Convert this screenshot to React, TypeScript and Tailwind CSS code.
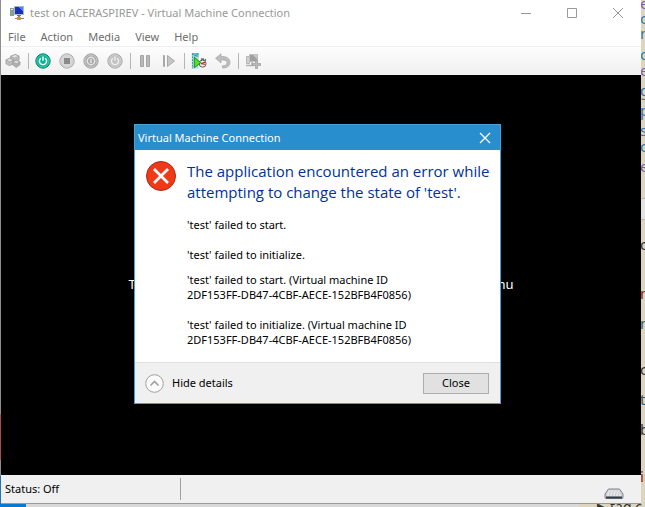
import React from "react";
import clsx from "clsx";

const menus = ["File", "Action", "Media", "View", "Help"];

const details = [
  { text: "'test' failed to start.", gap: "mt-0" },
  { text: "'test' failed to initialize.", gap: "mt-[15px]" },
  {
    text: "'test' failed to start. (Virtual machine ID 2DF153FF-DB47-4CBF-AECE-152BFB4F0856)",
    gap: "mt-[10px]",
  },
  {
    text: "'test' failed to initialize. (Virtual machine ID 2DF153FF-DB47-4CBF-AECE-152BFB4F0856)",
    gap: "mt-[15px]",
  },
];

// bits of the page that is open behind the window
const behind = [
  { char: "e", top: -6, color: "#7a5cc0" },
  { char: "c", top: 9, color: "#2878b8" },
  { char: "n", top: 24, color: "#2878b8" },
  { char: "c", top: 45, color: "#2878b8" },
  { char: "e", top: 61, color: "#7a5cc0" },
  { char: "g", top: 81, color: "#2878b8" },
  { char: "p", top: 101, color: "#2878b8" },
  { char: "s", top: 121, color: "#2878b8" },
  { char: "c", top: 137, color: "#2878b8" },
  { char: "e", top: 157, color: "#7a5cc0" },
  { char: "c", top: 235, color: "#333333" },
  { char: "n", top: 284, color: "#8b1a1a" },
  { char: "n", top: 314, color: "#27627f" },
  { char: "c", top: 360, color: "#333333" },
  { char: "t", top: 390, color: "#27627f" },
  { char: "b", top: 420, color: "#333333" },
  { char: "in", top: 467, color: "#8b1a1a" },
];

const VmIcon = () => (
  <svg width="16" height="16" viewBox="0 0 16 16" shapeRendering="crispEdges">
    <rect x="1" y="3" width="4" height="8" fill="#8f989c" />
    <rect x="2" y="4" width="2" height="1" fill="#e4e8ea" />
    <rect x="2" y="6" width="1" height="3" fill="#5fd14e" />
    <rect x="5" y="1" width="10" height="9" fill="#aeb8cc" />
    <rect x="6" y="2" width="8" height="7" fill="#1632b4" />
    <path d="M9 2h5v4z" fill="#4d80ec" />
    <rect x="8" y="10" width="4" height="1" fill="#6d747c" />
    <rect x="9" y="11" width="2" height="2" fill="#9a8a58" />
    <rect x="6" y="13" width="9" height="1" fill="#83888c" />
    <rect x="8" y="12" width="4" height="3" fill="#d9921b" />
  </svg>
);

const KeysIcon = () => (
  <svg width="17" height="16" viewBox="0 0 17 16" stroke="#999" strokeWidth=".7">
    <path d="M6 3l5-2 4 2v4l-5 2-4-2z" fill="#bdbdbd" />
    <path d="M6 3l5-2 4 2-5 2z" fill="#e2e2e2" />
    <path d="M1 7l4-2 4 2v4l-4 2-4-2z" fill="#bdbdbd" />
    <path d="M1 7l4-2 4 2-4 2z" fill="#e2e2e2" />
    <path d="M8 9l4-2 4 2v3l-4 3-4-3z" fill="#b0b0b0" />
    <path d="M8 9l4-2 4 2-4 2z" fill="#dcdcdc" />
  </svg>
);

const RoundIcon = ({ kind }: { kind: "start" | "off" | "shutdown" | "save" }) => {
  const on = kind === "start";
  const dark = kind === "shutdown";
  return (
    <svg width="16" height="16" viewBox="0 0 16 16" fill="none">
      <circle cx="8" cy="8" r="7.2" fill={on ? "#0bb595" : dark ? "#a9a9a9" : kind === "off" ? "#d6d6d6" : "#c2c2c2"} stroke={on ? "#16806e" : "#adadad"} />
      <circle cx="8" cy="8" r="6" stroke={on ? "#35ceb1" : "#cecece"} strokeWidth=".8" />
      {kind === "off" && <rect x="5" y="5" width="6" height="6" fill="#8a8a8a" />}
      {dark && (
        <>
          <circle cx="8" cy="8" r="3.7" stroke="#e6e6e6" strokeWidth="1.4" />
          <path d="M8 6v4" stroke="#e6e6e6" strokeWidth="1.5" />
        </>
      )}
      {(on || kind === "save") && (
        <path d="M5.8 5.2a3.6 3.6 0 1 0 4.4 0M8 3.5v4.2" stroke={on ? "#fff" : "#efefef"} strokeWidth="1.4" />
      )}
    </svg>
  );
};

const PauseIcon = () => (
  <svg width="16" height="16" viewBox="0 0 16 16" fill="#b8b8b8" stroke="#a6a6a6">
    <path d="M3.5 2.5h3v11h-3zM9.5 2.5h3v11h-3z" />
  </svg>
);

const ResumeIcon = () => (
  <svg width="16" height="16" viewBox="0 0 16 16" fill="#c6c6c6" stroke="#a8a8a8">
    <path d="M2.5 2.5h1v11h-1zM6.5 2.5v11l7-5.5z" />
  </svg>
);

const CheckpointIcon = () => (
  <svg width="17" height="16" viewBox="0 0 17 16">
    <path d="M1 0h7v16H1z" fill="#a9e0e8" />
    <path d="M1.5 0v16M7.5 0v4" stroke="#2496a6" strokeDasharray="2 1" />
    <path d="M3 2.5h4M1 .5h7" stroke="#158290" />
    <circle cx="12.3" cy="10.8" r="3.7" fill="#eee" stroke="#555" />
    <path d="M10.5 6H14M14.5 7.5l1.5-1" stroke="#444" strokeWidth="1.2" />
    <path d="M15 9.3l-4.5 1.5 4.5.7" stroke="#c41e28" strokeWidth="1.2" fill="none" />
    <path d="M3.5 4v11.3l6.8-5.6z" fill="#55dc27" stroke="#188a17" />
  </svg>
);

const RevertIcon = () => (
  <svg width="16" height="16" viewBox="0 0 16 16">
    <path d="M.5 5.3L6 .8v2.7c5-.3 9 1.5 9 6 0 3.5-3 5.5-7.5 5.5v-2.2c2.5 0 4.5-1 4.5-3 0-2.3-2.5-3-6-2.8v3z" fill="#bdbdbd" stroke="#a8a8a8" strokeWidth=".7" />
  </svg>
);

const EnhancedIcon = () => (
  <svg width="16" height="16" viewBox="0 0 16 16">
    <path d="M1.5 3.5h3v7h-3z" fill="#d0d0d0" stroke="#b5b5b5" />
    <path d="M4.5 1.5h8v7h-8z" fill="#a0a0a0" stroke="#c0c0c0" />
    <path d="M8 2h4v4z" fill="#c8c8c8" />
    <path d="M1 12.5h8M7 9v4" stroke="#b0b0b0" strokeWidth="1.5" />
    <path d="M10.5 7.5h2v3h3v2h-3v3h-2v-3h-3v-2h3z" fill="#b8b8b8" stroke="#a0a0a0" strokeWidth=".8" />
  </svg>
);

const Separator = ({ className }: { className?: string }) => (
  <span className={clsx("h-4 w-px bg-[#b5b5b5]", className)} />
);

const ToolButton = ({ label, className, children }: { label: string; className?: string; children: React.ReactNode }) => (
  <button aria-label={label} className={clsx("flex w-4 shrink-0 justify-center", className)}>
    {children}
  </button>
);

const Desktop = () => (
  <div className="absolute inset-0 overflow-hidden bg-[#ddd6bd]" aria-hidden="true">
    <div className="absolute inset-y-0 left-0 w-px bg-[#8e8e92]" />
    <div className="absolute left-0 top-[414px] h-[46px] w-px bg-[#a34e4a]" />
    <div className="absolute left-0 top-[476px] h-7 w-px bg-[#2674ae]" />
    <div className="absolute bottom-0 left-0 right-[66px] h-1 bg-[#d8d8d8]" />
    <div className="absolute bottom-0 left-0 h-1 w-[26px] bg-[#0779d0]" />
    <div className="absolute right-0 top-[198px] h-[22px] w-1 border-y border-[#bfb89f] bg-[#e4e2e0]" />
    {behind.map(({ char, top, color }) => (
      <span key={top} className="absolute left-[640px] text-[15px] leading-[18px]" style={{ top, color }}>
        {char}
      </span>
    ))}
    <span className="absolute left-[597px] top-[499px] flex items-center gap-1 whitespace-nowrap text-sm leading-[14px] text-[#333]">
      <span className="text-xs">▶</span>tag c
    </span>
  </div>
);

const ErrorDialog = () => (
  <section
    role="dialog"
    aria-labelledby="dialog-title"
    className="absolute left-[133px] top-[49px] flex w-[367px] flex-col border border-[#4a9fd4] bg-white text-black"
  >
    <header className="flex h-[25px] items-center justify-between bg-[#288ecd] pl-[3px] pr-[9px] text-white">
      <h2 id="dialog-title" className="text-[11px] leading-4">Virtual Machine Connection</h2>
      <button aria-label="Close dialog">
        <svg width="12" height="12" viewBox="0 0 12 12" stroke="#fff" strokeWidth="1.3">
          <path d="M1 1l10 10M11 1L1 11" />
        </svg>
      </button>
    </header>
    <div className="flex gap-[10px] pb-[15px] pl-[11px] pt-[11px]">
      <svg className="shrink-0" width="31" height="31" viewBox="0 0 31 31">
        <circle cx="15" cy="15" r="14.5" fill="#f03a17" stroke="#a32c18" />
        <path d="M8 8l14 14M22 8L8 22" stroke="#fff" strokeWidth="2.8" />
      </svg>
      <div>
        <h1 className="w-[308px] font-['Open_Sans',sans-serif] text-[15px] leading-[21px] text-[#003399]">
          The application encountered an error while attempting to change the state of 'test'.
        </h1>
        <div className="mt-[14px] w-[240px] text-[11px] leading-[15px]">
          {details.map(({ text, gap }) => (
            <p key={text} className={gap}>{text}</p>
          ))}
        </div>
      </div>
    </div>
    <footer className="flex h-[41px] items-center justify-between border-t border-[#dfdfdf] bg-[#f0f0f0] pl-[10px] pr-[11px] text-[11px]">
      <button className="flex items-center gap-2">
        <svg width="19" height="19" viewBox="0 0 19 19" fill="none" stroke="#a0a0a0">
          <circle cx="9.5" cy="9.5" r="8.8" fill="#fbfbfb" />
          <path d="M5.5 11.5l4-4 4 4" strokeWidth="1.6" />
        </svg>
        Hide details
      </button>
      <button className="h-[21px] w-[66px] border border-[#adadad] bg-[#e1e1e1]">Close</button>
    </footer>
  </section>
);

const App = () => {
  return (
    <div className="relative flex min-h-screen flex-col overflow-hidden font-['Noto_Sans','Open_Sans',sans-serif]">
      <Desktop />
      <main className="relative mb-[3px] ml-px mr-1 flex flex-1 flex-col border-b border-[#9a9a9a] bg-white">
        <header className="flex h-[25px] items-center pl-2 text-[#999]">
          <VmIcon />
          <h1 className="ml-[5px] flex-1 text-[11px] leading-4">test on ACERASPIREV - Virtual Machine Connection</h1>
          <div className="flex gap-[34px] pr-[17px]">
            <button aria-label="Minimize">
              <svg width="12" height="12" viewBox="0 0 12 12" stroke="#999"><path d="M1 6.5h10" /></svg>
            </button>
            <button aria-label="Maximize">
              <svg width="12" height="12" viewBox="0 0 12 12" fill="none" stroke="#999"><path d="M1.5 1.5h9v9h-9z" /></svg>
            </button>
            <button aria-label="Close">
              <svg width="12" height="12" viewBox="0 0 12 12" stroke="#999"><path d="M1 1l10 10M11 1L1 11" /></svg>
            </button>
          </div>
        </header>

        <nav className="flex h-[22px] items-center gap-[15px] border-b border-[#efefef] pl-[7px] pt-1 text-[11px] text-[#6d6d6d]">
          {menus.map((menu) => (
            <button key={menu}>{menu}</button>
          ))}
        </nav>

        <div className="flex h-7 items-center bg-linear-to-b from-[#fdfdfd] to-[#f0f0f0] pl-1">
          <ToolButton label="Ctrl+Alt+Delete"><KeysIcon /></ToolButton>
          <Separator className="ml-[7px]" />
          <ToolButton label="Start" className="ml-[6px]"><RoundIcon kind="start" /></ToolButton>
          <ToolButton label="Turn off" className="ml-2"><RoundIcon kind="off" /></ToolButton>
          <ToolButton label="Shut down" className="ml-2"><RoundIcon kind="shutdown" /></ToolButton>
          <ToolButton label="Save" className="ml-2"><RoundIcon kind="save" /></ToolButton>
          <Separator className="ml-[7px]" />
          <ToolButton label="Pause" className="ml-[6px]"><PauseIcon /></ToolButton>
          <ToolButton label="Reset" className="ml-2"><ResumeIcon /></ToolButton>
          <Separator className="ml-[7px]" />
          <ToolButton label="Checkpoint" className="ml-[6px]"><CheckpointIcon /></ToolButton>
          <ToolButton label="Revert" className="ml-2"><RevertIcon /></ToolButton>
          <Separator className="ml-[7px]" />
          <ToolButton label="Enhanced session" className="ml-[6px]"><EnhancedIcon /></ToolButton>
        </div>

        <div className="relative flex flex-1 flex-col items-center justify-center bg-black text-white">
          <p className="mt-[18px] text-[13px] leading-5">To start the virtual machine, select 'Start' from the Action menu</p>
          <ErrorDialog />
        </div>

        <footer className="flex h-7 items-center bg-[#f0f0f0] pl-1 text-[11px] text-black">
          <span className="w-[175px]">Status: Off</span>
          <span className="h-[22px] w-px bg-[#a0a0a0]" />
          <svg className="ml-auto mr-[17px] mt-[10px]" width="20" height="12" viewBox="0 0 20 12">
            <path d="M4.5 1h11L19 6v3.5q0 1-1 1H2q-1 0-1-1V6z" fill="#c9ccd1" stroke="#80848a" />
            <path d="M4.5 3h11M3.5 5h13M3 7h14" stroke="#fff" strokeDasharray="2 1" />
            <path d="M2 9.5h16" stroke="#363d47" strokeWidth="2" />
          </svg>
        </footer>
      </main>
    </div>
  );
};

export default App;
